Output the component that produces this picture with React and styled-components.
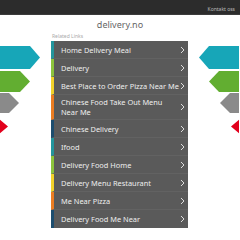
import styled, { createGlobalStyle } from "styled-components";

const links = [
  "Home Delivery Meal",
  "Delivery",
  "Best Place to Order Pizza Near Me",
  "Chinese Food Take Out Menu Near Me",
  "Chinese Delivery",
  "Ifood",
  "Delivery Food Home",
  "Delivery Menu Restaurant",
  "Me Near Pizza",
  "Delivery Food Me Near",
];

const accents = ["#23959c", "#8cc43c", "#f2d22a", "#ec7d22", "#1d4d6e"];

const arrows = [
  { color: "#17a6b8", top: 0, h: 23, tip: 40 },
  { color: "#62ae31", top: 25, h: 21, tip: 30 },
  { color: "#8a8a8a", top: 47, h: 20, tip: 19 },
  { color: "#e2001c", top: 72, h: 17, tip: 8 },
];

const GlobalStyle = createGlobalStyle`
  body {
    margin: 0;
    background: #fff;
    font-family: "Noto Sans", "Liberation Sans", sans-serif;
  }
`;

const Page = styled.div`
  width: 240px;
  height: 240px;
  overflow: hidden;
`;

const TopBar = styled.header`
  height: 15px;
  background: #2c2c2c;
  border-bottom: 1px solid #3c3c3c;
  display: flex;
  justify-content: flex-end;
  align-items: center;
  padding: 3px 5px 0 0;
  box-sizing: border-box;
  font-size: 5px;
  color: #bbb;
`;

const Title = styled.h1`
  margin: 4px 0 0;
  text-align: center;
  font-size: 9px;
  font-weight: 400;
  color: #666;
  line-height: 11px;
`;

const Main = styled.div`
  display: flex;
  align-items: flex-start;
`;

const Side = styled.svg`
  flex: 0 0 auto;
  margin-top: 16px;
  display: block;
`;

const Column = styled.div`
  width: 137px;
  margin: 0 -1px;
`;

const Label = styled.div`
  font-size: 5px;
  color: #aaa;
  line-height: 7px;
  margin-top: 3px;
  padding-left: 1px;
`;

const List = styled.ul`
  list-style: none;
  margin: 1px 0 0;
  padding: 0;
  background: #5a5a5a;
`;

const Item = styled.li`
  display: flex;
  align-items: center;
  justify-content: space-between;
  min-height: 18px;
  box-sizing: border-box;
  padding: 2px 3px 2px 7px;
  border-left: 3px solid ${({ $accent }) => $accent};
  border-bottom: 1px solid #626262;
  color: #eee;
  font-size: 7.4px;
  line-height: 10px;
  &:last-child {
    border-bottom: none;
  }
`;

const Chevron = styled.svg`
  flex: 0 0 auto;
`;

const Arrows = ({ flip }) => (
  <Side width="52" height="90" viewBox="0 0 52 90">
    <g transform={flip ? "translate(52 0) scale(-1 1)" : undefined}>
      {arrows.map((a) => (
        <polygon
          key={a.color}
          fill={a.color}
          points={`0,${a.top} ${a.tip - 10},${a.top} ${a.tip},${a.top + a.h / 2} ${a.tip - 10},${a.top + a.h} 0,${a.top + a.h}`}
        />
      ))}
    </g>
  </Side>
);

export default function App() {
  return (
    <Page>
      <GlobalStyle />
      <TopBar>Kontakt oss</TopBar>
      <Title>delivery.no</Title>
      <Main>
        <Arrows />
        <Column>
          <Label>Related Links</Label>
          <List>
            {links.map((t, i) => (
              <Item key={t} $accent={accents[i % accents.length]}>
                <span>{t}</span>
                <Chevron width="5" height="8" viewBox="0 0 5 8">
                  <path d="M1 1 L4 4 L1 7" fill="none" stroke="#ddd" strokeWidth="1" />
                </Chevron>
              </Item>
            ))}
          </List>
        </Column>
        <Arrows flip />
      </Main>
    </Page>
  );
}
